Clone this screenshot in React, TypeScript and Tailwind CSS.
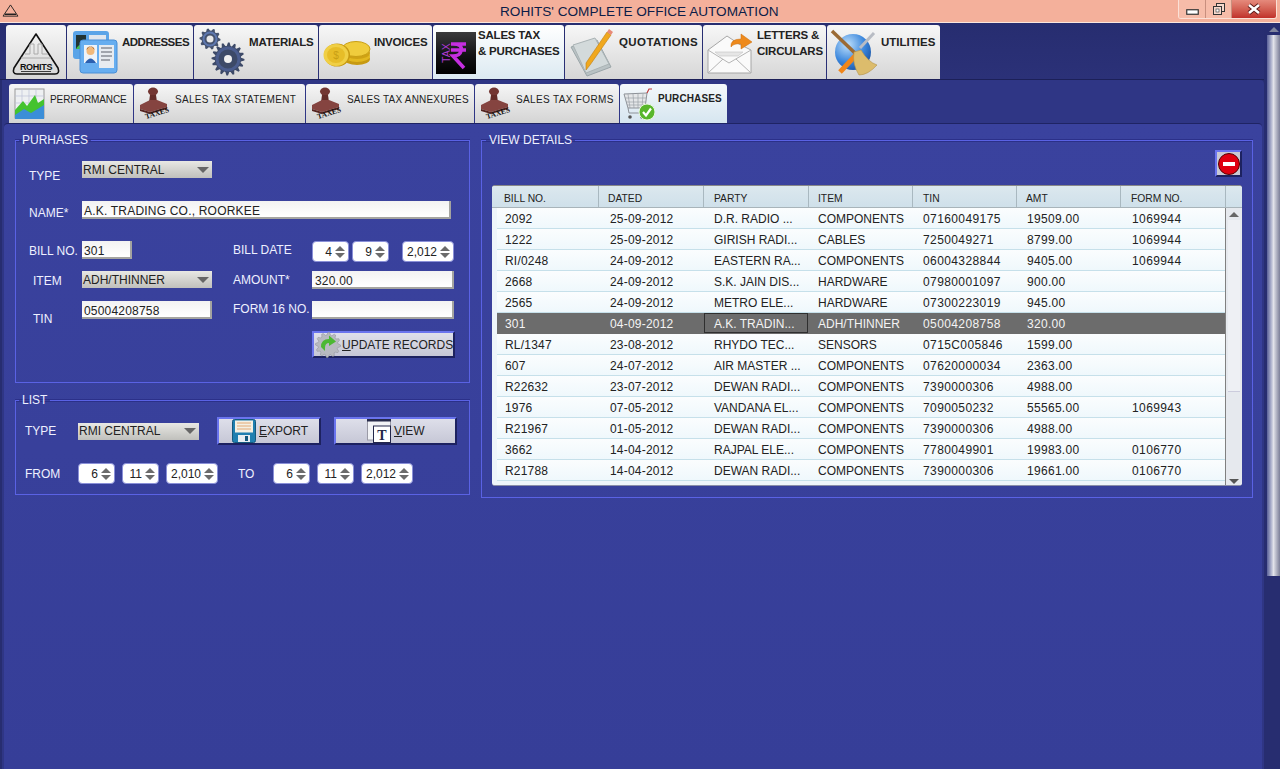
import React from 'react';

// teeth for the cog drawings
function gearPath(cx: number, cy: number, r: number, teeth: number) {
    const pts: string[] = [];
    for (let i = 0; i < teeth * 4; i++) {
        const a = (i / (teeth * 4)) * Math.PI * 2;
        const rad = i % 4 < 2 ? r : r * 0.8;
        pts.push(`${(cx + Math.cos(a) * rad).toFixed(1)},${(cy + Math.sin(a) * rad).toFixed(1)}`);
    }
    return `M${pts.join('L')}Z`;
}

const LogoIcon = ({ className }: { className?: string }) => (
    <svg viewBox="0 0 50 44" className={className}>
        <path d="M25 2 L47 36 Q49 42 44 42 H6 Q1 42 3 36 Z" fill="none" stroke="#111" strokeWidth="1.6" strokeLinejoin="round" />
        <path d="M14 22 H19 V12 H23 V22 H27 V12 H31 V22 H37" fill="none" stroke="#aaa" strokeWidth="1" />
        <path d="M10 26 H40" stroke="#aaa" strokeWidth="1" />
        <text x="25" y="37.5" textAnchor="middle" fontSize="9" fontWeight="700" letterSpacing="-0.3" fontFamily="Liberation Sans" fill="#111">ROHITS</text>
        <path d="M10 39.5 H40" stroke="#111" strokeWidth="0.8" />
    </svg>
);

const CardsIcon = ({ className }: { className?: string }) => (
    <svg viewBox="0 0 46 44" className={className}>
        <rect x="1" y="1" width="36" height="28" rx="3" fill="#5aa4e8" />
        <rect x="4" y="5" width="10" height="14" fill="#233" />
        <path d="M4 19 Q9 10 14 19 Z" fill="#3fbf4a" />
        <rect x="17" y="5" width="17" height="18" fill="#dfe6ee" />
        <rect x="8" y="10" width="37" height="33" rx="3" fill="#67aef0" stroke="#4a8fd6" />
        <rect x="12" y="15" width="13" height="18" fill="#eef3f8" />
        <circle cx="18.5" cy="21" r="4" fill="#f2b97a" />
        <path d="M14.5 20 Q18.5 13 22.5 20 L22 18 Q18.5 14.5 15 18 Z" fill="#a05a1c" />
        <path d="M13 33 Q18.5 24 24 33 Z" fill="#2b5fb0" />
        <rect x="27" y="15" width="15" height="23" fill="#e7ebf0" />
        <path d="M29 18 H40 M29 22 H40 M29 26 H40 M29 30 H38" stroke="#8b8f96" strokeWidth="1.4" />
    </svg>
);

const GearsIcon = ({ className }: { className?: string }) => (
    <svg viewBox="0 0 46 48" className={className}>
        <path d={gearPath(11, 11, 10.5, 10)} fill="#46536e" />
        <circle cx="11" cy="11" r="3.5" fill="#e8e8e8" />
        <circle cx="11" cy="11" r="6.5" fill="none" stroke="#5e78b0" strokeWidth="2" />
        <path d={gearPath(29, 31, 16.5, 16)} fill="#3d4a68" />
        <circle cx="29" cy="31" r="11" fill="none" stroke="#4b5d8e" strokeWidth="3" />
        <circle cx="29" cy="31" r="4" fill="#efefef" />
    </svg>
);

const CoinsIcon = ({ className }: { className?: string }) => (
    <svg viewBox="0 0 48 28" className={className}>
        <ellipse cx="34" cy="19" rx="13" ry="6" fill="#c79a12" />
        <ellipse cx="34" cy="16" rx="13" ry="6" fill="#e3b81f" />
        <ellipse cx="34" cy="13" rx="13" ry="6" fill="#cfa214" />
        <ellipse cx="33" cy="9" rx="14" ry="7.5" fill="#f0cc3c" stroke="#c99f14" />
        <ellipse cx="14" cy="15" rx="13" ry="11.5" fill="#c79a12" />
        <ellipse cx="13" cy="15" rx="12.5" ry="11" fill="#f0cf45" />
        <ellipse cx="13" cy="15" rx="9" ry="8" fill="#e7bd28" />
        <text x="13" y="19" textAnchor="middle" fontSize="10" fontFamily="Liberation Sans" fill="#c99f14">$</text>
    </svg>
);

const TaxIcon = ({ className }: { className?: string }) => (
    <svg viewBox="0 0 40 42" className={className}>
        <defs>
            <linearGradient id="taxBg" x1="0" y1="0" x2="0" y2="1">
                <stop offset="0" stopColor="#3a3a3c" />
                <stop offset="0.55" stopColor="#121214" />
                <stop offset="1" stopColor="#000" />
            </linearGradient>
        </defs>
        <rect width="40" height="42" fill="url(#taxBg)" />
        <path d="M15 12 H30 M15 18 H30 M17 12 Q27 12 25 19 Q24 24 17 24 L28 36" fill="none" stroke="#c52ee0" strokeWidth="3.6" />
        <text transform="translate(14 31) rotate(-90)" fontSize="10.5" fontFamily="Liberation Sans" fill="#b03ad8">TAX</text>
    </svg>
);

const PencilIcon = ({ className }: { className?: string }) => (
    <svg viewBox="0 0 46 48" className={className}>
        <path d="M2 18 L28 11 L42 38 L18 47 Z" fill="#b9c2c4" stroke="#9aa5a8" />
        <path d="M4 16 L26 9 L40 35 L17 44 Z" fill="#d3dadb" stroke="#aab3b5" />
        <path d="M38 3 L42 6 L21 36 L17 41 L17 34 Z" fill="#f0a81e" stroke="#c07d10" strokeWidth="0.6" />
        <path d="M38 3 L40 0 L44 3 L42 6 Z" fill="#e88a78" />
    </svg>
);

const EnvelopeIcon = ({ className }: { className?: string }) => (
    <svg viewBox="0 0 46 42" className={className}>
        <path d="M1 18 L20 4 L32 12 L44 18 V41 H1 Z" fill="#fafafa" stroke="#a6a6a6" />
        <path d="M1 18 L22 31 L44 18 M1 41 L16 27 M44 41 L29 27" fill="none" stroke="#b4b4b4" />
        <path d="M8 20 H36 L31 24 H13 Z" fill="#e6e6e6" stroke="#c4c4c4" strokeWidth="0.6" />
        <path d="M24 15 Q23 7 34 7 V2 L45 10 L34 17 V12 Q27 11 24 15 Z" fill="#ee8a1c" stroke="#c96c0e" strokeWidth="0.5" />
    </svg>
);

const BroomIcon = ({ className }: { className?: string }) => (
    <svg viewBox="0 0 48 48" className={className}>
        <defs>
            <radialGradient id="globe" cx="0.35" cy="0.3" r="0.8">
                <stop offset="0" stopColor="#bfe0fb" />
                <stop offset="0.6" stopColor="#3a86dc" />
                <stop offset="1" stopColor="#174e9e" />
            </radialGradient>
        </defs>
        <circle cx="23" cy="24" r="18" fill="url(#globe)" />
        <path d="M10 44 L27 26" stroke="#f0861a" strokeWidth="5" />
        <path d="M30 20 L44 5" stroke="#b8bcc4" strokeWidth="3" />
        <path d="M2 3 L27 27" stroke="#9b6a34" strokeWidth="3.5" />
        <path d="M24 24 L31 22 Q38 34 47 37 Q38 47 29 47 Q22 36 24 24 Z" fill="#dcbc6c" stroke="#b4944a" strokeWidth="0.6" />
    </svg>
);

const ChartIcon = ({ className }: { className?: string }) => (
    <svg viewBox="0 0 32 32" className={className}>
        <rect x="1" y="1" width="29" height="29" fill="#eef0f2" stroke="#9a9a9a" />
        <path d="M1 8 H30 M1 15 H30 M8 1 V30 M15 1 V30 M22 1 V30" stroke="#bcc2d8" strokeWidth="0.7" />
        <path d="M1 22 L9 13 L13 18 L21 7 L24 15 L30 11 V23 L23 24 L18 27 H6 L1 28 Z" fill="#44c32f" />
        <path d="M1 27 L10 21 L17 25 L30 17 V31 H1 Z" fill="#3b8ed8" />
    </svg>
);

const StampIcon = ({ className }: { className?: string }) => (
    <svg viewBox="0 0 32 34" className={className}>
        <ellipse cx="14" cy="4.5" rx="5" ry="4" fill="#733632" />
        <path d="M11 8 H17 L18 15 H10 Z" fill="#642c28" />
        <path d="M1 18 L11 13 H18 L28 17 V20 L11 25 L1 22 Z" fill="#854440" />
        <path d="M1 22 L11 25 L28 20 V22 L11 27 L1 24 Z" fill="#552421" />
        <text transform="translate(7 32) rotate(-17)" fontSize="7.5" fontWeight="700" fontFamily="Liberation Serif" fill="#111">TAXES</text>
    </svg>
);

const CartIcon = ({ className }: { className?: string }) => (
    <svg viewBox="0 0 32 34" className={className}>
        <path d="M1 7 L24 6 L22 21 H5 Z" fill="#e4e6e8" stroke="#8d9298" />
        <path d="M5 7 L7 21 M10 7 L11 21 M15 7 L15 21 M20 7 L19 21 M2 11 H23 M3 15 H23 M4 18 H22" stroke="#9ba1a8" strokeWidth="0.7" />
        <path d="M24 6 L26 2 H29" fill="none" stroke="#c03a3a" strokeWidth="1.2" />
        <path d="M5 21 L6 26 H20" fill="none" stroke="#8d9298" />
        <circle cx="7" cy="30" r="1.8" fill="#555" />
        <circle cx="19" cy="30" r="1.8" fill="#555" />
        <circle cx="24" cy="25" r="8" fill="#58b62c" stroke="#eaf6e0" />
        <path d="M20 25 L23 28.5 L28 21.5" fill="none" stroke="#fff" strokeWidth="2.2" />
    </svg>
);

const RefreshGear = ({ className }: { className?: string }) => (
    <svg viewBox="0 0 26 26" className={className}>
        <path d={gearPath(13, 13, 12.5, 12)} fill="#b8bac0" stroke="#8a8c92" strokeWidth="0.5" />
        <path d="M6 15 Q6 7 14 7 L14 3.5 L21 9.5 L14 14 L14 11 Q10 11 10 16 L10 19 Z" fill="#4cb832" />
    </svg>
);

const FloppyIcon = ({ className }: { className?: string }) => (
    <svg viewBox="0 0 24 24" className={className}>
        <rect x="0.5" y="0.5" width="23" height="23" rx="2" fill="#1f7fb0" stroke="#14597e" />
        <rect x="3" y="1.5" width="18" height="12" fill="#f4f0e4" />
        <path d="M5 4 H19 M5 7 H19 M5 10 H19" stroke="#e0a06a" strokeWidth="0.9" />
        <rect x="6" y="16" width="12" height="7" fill="#e8eef2" />
        <rect x="13" y="17" width="3" height="5" fill="#14597e" />
    </svg>
);

const ViewIcon = ({ className }: { className?: string }) => (
    <svg viewBox="0 0 24 24" className={className}>
        <rect x="0.5" y="1" width="23" height="20" fill="#f2f3f6" stroke="#9a9aa6" />
        <rect x="0" y="0" width="24" height="2.5" fill="#262a4a" />
        <rect x="6.5" y="7" width="17" height="16.5" fill="#fff" stroke="#23264a" />
        <text x="15" y="20.5" textAnchor="middle" fontSize="14" fontWeight="700" fontFamily="Liberation Serif" fill="#23264a">T</text>
    </svg>
);

const mainTabs = [
    { w: 'w-[60px]', left: 'w-[60px]', icon: <LogoIcon className="w-[50px] h-[44px] mt-[7px]" />, lines: [] as string[], track: '' },
    { w: 'w-[126px]', left: 'w-[55px]', icon: <CardsIcon className="w-[46px] h-[44px] mt-[5px]" />, lines: ['ADDRESSES'], track: 'tracking-[-0.5px]' },
    { w: 'w-[124px]', left: 'w-[55px]', icon: <GearsIcon className="w-[46px] h-[48px] mt-[3px]" />, lines: ['MATERIALS'], track: 'tracking-[-0.2px]' },
    { w: 'w-[113px]', left: 'w-[55px]', icon: <CoinsIcon className="w-[48px] h-[28px] mt-[15px]" />, lines: ['INVOICES'], track: 'tracking-[-0.2px]' },
    { w: 'w-[131px]', left: 'w-[45px]', icon: <TaxIcon className="w-[40px] h-[42px] mt-[7px]" />, lines: ['SALES TAX', '& PURCHASES'], active: true, track: 'tracking-[-0.2px]' },
    { w: 'w-[137px]', left: 'w-[54px]', icon: <PencilIcon className="w-[46px] h-[48px] mt-[4px]" />, lines: ['QUOTATIONS'], track: 'tracking-[0.4px]' },
    { w: 'w-[123px]', left: 'w-[54px]', icon: <EnvelopeIcon className="w-[46px] h-[42px] mt-[7px]" />, lines: ['LETTERS &', 'CIRCULARS'], track: 'tracking-[-0.2px]' },
    { w: 'w-[113px]', left: 'w-[54px]', icon: <BroomIcon className="w-[48px] h-[48px] mt-[3px]" />, lines: ['UTILITIES'], track: 'tracking-[0px]' },
];

const subTabs = [
    { w: 'w-[124px]', left: 'w-[41px]', icon: <ChartIcon className="w-[32px] h-[32px] mt-[4px]" />, label: 'PERFORMANCE', track: 'tracking-[-0.1px]' },
    { w: 'w-[171px]', left: 'w-[41px]', icon: <StampIcon className="w-[32px] h-[34px] mt-[3px]" />, label: 'SALES TAX STATEMENT', track: 'tracking-[0.3px]' },
    { w: 'w-[168px]', left: 'w-[41px]', icon: <StampIcon className="w-[32px] h-[34px] mt-[3px]" />, label: 'SALES TAX ANNEXURES', track: 'tracking-[0.2px]' },
    { w: 'w-[144px]', left: 'w-[41px]', icon: <StampIcon className="w-[32px] h-[34px] mt-[3px]" />, label: 'SALES TAX FORMS', track: 'tracking-[0.35px]' },
    { w: 'w-[107px]', left: 'w-[38px]', icon: <CartIcon className="w-[32px] h-[34px] mt-[3px]" />, label: 'PURCHASES', active: true, track: 'tracking-[0.1px]' },
];

const rows = [
    ['2092', '25-09-2012', 'D.R. RADIO ...', 'COMPONENTS', '07160049175', '19509.00', '1069944'],
    ['1222', '25-09-2012', 'GIRISH RADI...', 'CABLES', '7250049271', '8799.00', '1069944'],
    ['RI/0248', '24-09-2012', 'EASTERN RA...', 'COMPONENTS', '06004328844', '9405.00', '1069944'],
    ['2668', '24-09-2012', 'S.K. JAIN DIS...', 'HARDWARE', '07980001097', '900.00', ''],
    ['2565', '24-09-2012', 'METRO ELE...', 'HARDWARE', '07300223019', '945.00', ''],
    ['301', '04-09-2012', 'A.K. TRADIN...', 'ADH/THINNER', '05004208758', '320.00', ''],
    ['RL/1347', '23-08-2012', 'RHYDO TEC...', 'SENSORS', '0715C005846', '1599.00', ''],
    ['607', '24-07-2012', 'AIR MASTER ...', 'COMPONENTS', '07620000034', '2363.00', ''],
    ['R22632', '23-07-2012', 'DEWAN RADI...', 'COMPONENTS', '7390000306', '4988.00', ''],
    ['1976', '07-05-2012', 'VANDANA EL...', 'COMPONENTS', '7090050232', '55565.00', '1069943'],
    ['R21967', '01-05-2012', 'DEWAN RADI...', 'COMPONENTS', '7390000306', '4988.00', ''],
    ['3662', '14-04-2012', 'RAJPAL ELE...', 'COMPONENTS', '7780049901', '19983.00', '0106770'],
    ['R21788', '14-04-2012', 'DEWAN RADI...', 'COMPONENTS', '7390000306', '19661.00', '0106770'],
];

const headers = ['BILL NO.', 'DATED', 'PARTY', 'ITEM', 'TIN', 'AMT', 'FORM NO.'];
const headerCols = ['w-[107px] pl-[12px]', 'w-[105px] pl-[9px]', 'w-[105px] pl-[10px]', 'w-[104px] pl-[9px]', 'w-[104px] pl-[10px]', 'w-[104px] pl-[9px]', 'w-[105px] pl-[10px]'];
const cellCols = ['w-[103px] pl-[8px]', 'w-[104px] pl-[10px]', 'w-[104px] pl-[10px]', 'w-[105px] pl-[10px]', 'w-[104px] pl-[10px]', 'w-[105px] pl-[10px]', 'w-[103px] pl-[10px]'];
const cellTrack = ['tracking-[0.2px]', 'tracking-[0.2px]', 'tracking-[0px]', 'tracking-[0px]', 'tracking-[0.4px]', 'tracking-[0.3px]', 'tracking-[0.4px]'];

const Arrows = () => (
    <span className="flex flex-col gap-[2px] ml-[3px] mr-[3px]">
        <span className="w-0 h-0 border-x-[5.5px] border-x-transparent border-b-[5px] border-b-[#6b6b6b]" />
        <span className="w-0 h-0 border-x-[5.5px] border-x-transparent border-t-[5px] border-t-[#6b6b6b]" />
    </span>
);

const Spinner = ({ value, className }: { value: string; className: string }) => (
    <div className={`${className} h-[21px] bg-white rounded-[4px] border border-[#8a90d8] flex items-center justify-end text-[12px] text-[#222] shrink-0`}>
        {value}
        <Arrows />
    </div>
);

const Combo = ({ value, className }: { value: string; className: string }) => (
    <div className={`${className} h-[17px] bg-gradient-to-b from-[#e8e8e4] to-[#c0c0bc] flex items-center justify-between pl-[1px] pr-[2px] text-[12px] text-[#222] shrink-0`}>
        <span>{value}</span>
        <span className="w-0 h-0 mr-[1px] border-x-[6px] border-x-transparent border-t-[6px] border-t-[#666]" />
    </div>
);

const Field = ({ value, className }: { value?: string; className: string }) => (
    <div className={`${className} h-[18px] bg-gradient-to-b from-[#f2f2f2] to-white border-r-2 border-b-2 border-r-[#a4a4a0] border-b-[#a4a4a0] flex items-center pl-[2px] pt-[4px] text-[12px] leading-[14px] tracking-[0.2px] text-[#222] shrink-0`}>
        {value}
    </div>
);

const Label = ({ text, className }: { text: string; className: string }) => (
    <span className={`${className} text-[12px] leading-[14px] text-[#eef0ff] whitespace-nowrap shrink-0`}>{text}</span>
);

const ActionButton = ({ className, icon, hot, rest }: { className: string; icon: React.ReactNode; hot: string; rest: string }) => (
    <div className={`${className} bg-gradient-to-b from-[#dedfea] to-[#c6c7d6] border-2 border-l-[#6a74ee] border-t-[#6a74ee] border-r-[#1d2260] border-b-[#1d2260] flex items-center text-[12px] text-[#222] whitespace-nowrap shrink-0`}>
        {icon}
        <span><span className="underline">{hot}</span>{rest}</span>
    </div>
);

const legendClass = 'ml-[3px] px-[3px] text-[12px] leading-[14px] text-[#eef0ff]';
const fieldsetClass = 'border border-[#5a62e4] shadow-[inset_0_1px_0_#2b3089,0_-1px_0_#2b3089] shrink-0';

export default function App() {
    return (
        <div className="w-[1280px] h-[769px] overflow-hidden flex flex-col bg-[#272d70]" style={{ fontFamily: '"Liberation Sans", Arial, sans-serif' }}>
            {/* title bar */}
            <div className="h-[23px] shrink-0 bg-[#f4b09b] border-b border-b-[#fbe6de] flex items-start">
                <svg viewBox="0 0 18 15" className="w-[17px] h-[14px] ml-[2px] mt-[4px] shrink-0">
                    <path d="M9 1 L17 13 H1 Z" fill="none" stroke="#222" strokeWidth="1" strokeLinejoin="round" />
                    <path d="M3 11 H15" stroke="#222" strokeWidth="1.6" />
                </svg>
                <span className="ml-[481px] text-[13.6px] leading-[24px] text-[#0c1d48] whitespace-nowrap">ROHITS' COMPLETE OFFICE AUTOMATION</span>
                <div className="ml-auto mr-[3px] h-[19px] flex border border-t-0 border-[#fbe0d6] rounded-b-[3px] overflow-hidden">
                    <div className="w-[27px] border-r border-[#c88f7e] flex items-end justify-center bg-[#f6bca9]">
                        <svg viewBox="0 0 13 6" className="w-[13px] h-[6px] mb-[3px]"><rect x="0.75" y="0.75" width="11.5" height="4.5" fill="#fff" stroke="#333" strokeWidth="1.2" /></svg>
                    </div>
                    <div className="w-[26px] border-r border-[#c88f7e] flex items-center justify-center bg-[#f6bca9]">
                        <svg viewBox="0 0 12 12" className="w-[12px] h-[12px]"><rect x="3.5" y="0.5" width="8" height="8" fill="#f6d8cc" stroke="#333" /><rect x="0.5" y="3.5" width="8" height="8" fill="#f6d8cc" stroke="#333" /><rect x="3" y="6" width="3" height="3" fill="#fff" stroke="#333" strokeWidth="0.6" /></svg>
                    </div>
                    <div className="w-[44px] flex items-center justify-center bg-gradient-to-b from-[#e58a7c] to-[#c0302a]">
                        <svg viewBox="0 0 16 12" className="w-[16px] h-[12px]"><path d="M3 2 L13 10 M13 2 L3 10" stroke="#5a1a18" strokeWidth="4.4" /><path d="M3 2 L13 10 M13 2 L3 10" stroke="#fff" strokeWidth="2.6" /></svg>
                    </div>
                </div>
            </div>

            <div className="flex-1 flex min-h-0">
                <div className="w-[1264px] flex flex-col">
                    {/* top tabs */}
                    <div className="h-[57px] shrink-0 pl-[6px] pt-[2px] flex gap-[1px] bg-gradient-to-b from-[#272d70] to-[#2b3178] border-b border-b-[#1c2058]">
                        {mainTabs.map((t, i) => (
                            <div key={i} className={`${t.w} h-[54px] flex rounded-t-[3px] overflow-hidden shrink-0 bg-gradient-to-b ${t.active ? 'from-[#ffffff] to-[#dceaf2]' : 'from-[#f7f7f7] to-[#d6d6d6]'}`}>
                                <div className={`${t.left} flex justify-center items-start shrink-0`}>{t.icon}</div>
                                <div className={`flex flex-col ${t.lines.length === 2 ? 'pt-[2px]' : 'pt-[9px]'}`}>
                                    {t.lines.map(l => <span key={l} className={`text-[11.5px] leading-[16px] font-bold text-[#222] whitespace-nowrap ${t.track}`}>{l}</span>)}
                                </div>
                            </div>
                        ))}
                    </div>

                    {/* sales tax panel */}
                    <div className="flex-1 ml-[2px] flex flex-col bg-[#2f3685] rounded-tr-[4px] min-h-0">
                        <div className="h-[43px] shrink-0 pl-[7px] pt-[4px] flex gap-[1px]">
                            {subTabs.map((t, i) => (
                                <div key={i} className={`${t.w} h-[39px] flex rounded-t-[3px] overflow-hidden shrink-0 bg-gradient-to-b ${t.active ? 'from-[#f4f8fb] to-[#d6e6f0]' : 'from-[#f6f6f6] to-[#d4d4d4]'}`}>
                                    <div className={`${t.left} flex justify-center items-start shrink-0`}>{t.icon}</div>
                                    <span className={`text-[10px] leading-[14px] whitespace-nowrap text-[#222] ${t.track} ${t.active ? 'font-bold pt-[8px]' : 'pt-[9px]'}`}>{t.label}</span>
                                </div>
                            ))}
                        </div>

                        <div className="flex-1 ml-[2px] mr-[2px] flex items-start gap-[11px] pl-[11px] pt-[9px] bg-gradient-to-b from-[#3a429e] to-[#363e98] border-t border-t-[#1f2464] rounded-t-[4px]">
                            {/* left column */}
                            <div className="flex flex-col w-[455px] gap-[10px] shrink-0">
                                <fieldset className={`${fieldsetClass} h-[250px]`}>
                                    <legend className={legendClass}>PURHASES</legend>
                                    <div className="flex items-start mt-[14px]">
                                        <Label text="TYPE" className="ml-[13px] w-[53px] mt-[8px]" />
                                        <Combo value="RMI CENTRAL" className="w-[130px]" />
                                    </div>
                                    <div className="flex items-start mt-[18px]">
                                        <Label text="NAME*" className="ml-[13px] w-[53px] mt-[5px]" />
                                        <Field value="A.K. TRADING CO., ROORKEE" className="w-[369px]" />
                                    </div>
                                    <div className="flex items-start mt-[21px]">
                                        <Label text="BILL NO." className="ml-[13px] w-[53px] mt-[3px]" />
                                        <Field value="301" className="w-[50px]" />
                                        <Label text="BILL DATE" className="ml-[101px] w-[79px] mt-[2px]" />
                                        <Spinner value="4" className="w-[37px]" />
                                        <Spinner value="9" className="w-[37px] ml-[3px]" />
                                        <Spinner value="2,012" className="w-[52px] ml-[13px]" />
                                    </div>
                                    <div className="flex items-start mt-[9px]">
                                        <Label text="ITEM" className="ml-[17px] w-[49px] mt-[3px]" />
                                        <Combo value="ADH/THINNER" className="w-[130px]" />
                                        <Label text="AMOUNT*" className="ml-[21px] w-[79px] mt-[2px]" />
                                        <Field value="320.00" className="w-[142px] pl-[3px]" />
                                    </div>
                                    <div className="flex items-start mt-[12px]">
                                        <Label text="TIN" className="ml-[17px] w-[49px] mt-[11px]" />
                                        <Field value="05004208758" className="w-[130px]" />
                                        <Label text="FORM 16 NO." className="ml-[21px] w-[79px] mt-[1px]" />
                                        <Field className="w-[142px]" />
                                    </div>
                                    <div className="flex mt-[5px]">
                                        <ActionButton className="ml-[296px] w-[143px] h-[27px]" icon={<RefreshGear className="w-[26px] h-[26px] mx-[1px] shrink-0" />} hot="U" rest="PDATE RECORDS" />
                                    </div>
                                </fieldset>

                                <fieldset className={`${fieldsetClass} h-[102px]`}>
                                    <legend className={legendClass}>LIST</legend>
                                    <div className="flex items-center mt-[10px]">
                                        <Label text="TYPE" className="ml-[9px] w-[53px]" />
                                        <Combo value="RMI CENTRAL" className="w-[121px]" />
                                        <ActionButton className="ml-[18px] w-[104px] h-[28px]" icon={<FloppyIcon className="w-[24px] h-[24px] ml-[13px] mr-[3px] shrink-0" />} hot="E" rest="XPORT" />
                                        <ActionButton className="ml-[13px] w-[123px] h-[28px]" icon={<ViewIcon className="w-[24px] h-[24px] ml-[31px] mr-[3px] shrink-0" />} hot="V" rest="IEW" />
                                    </div>
                                    <div className="flex items-center mt-[18px]">
                                        <Label text="FROM" className="ml-[9px] w-[53px]" />
                                        <Spinner value="6" className="w-[37px]" />
                                        <Spinner value="11" className="w-[37px] ml-[7px]" />
                                        <Spinner value="2,010" className="w-[52px] ml-[7px]" />
                                        <Label text="TO" className="ml-[20px] w-[35px]" />
                                        <Spinner value="6" className="w-[37px]" />
                                        <Spinner value="11" className="w-[37px] ml-[7px]" />
                                        <Spinner value="2,012" className="w-[52px] ml-[7px]" />
                                    </div>
                                </fieldset>
                            </div>

                            {/* right column */}
                            <fieldset className={`${fieldsetClass} w-[771px] h-[365px] px-[10px]`}>
                                <legend className="-ml-[6px] px-[3px] text-[12px] leading-[14px] text-[#eef0ff]">VIEW DETAILS</legend>
                                <div className="flex justify-end mt-[3px]">
                                    <div className="w-[27px] h-[27px] bg-[#c9c9d4] border-2 border-l-[#6a74ee] border-t-[#6a74ee] border-r-[#1d2260] border-b-[#1d2260] flex items-center justify-center">
                                        <div className="w-[22px] h-[22px] rounded-full bg-[#e00010] border border-[#500] flex items-center justify-center">
                                            <div className="w-[12px] h-[4px] bg-white" />
                                        </div>
                                    </div>
                                </div>
                                <div className="mt-[8px] h-[301px] bg-[#eef5fa] rounded-[3px] border-t border-t-[#888] border-b border-b-[#8a8ea8] overflow-hidden flex flex-col">
                                    <div className="h-[22px] shrink-0 flex bg-gradient-to-b from-[#dce8ee] to-[#cfe0ea] border-b border-b-[#a8b4ba]">
                                        {headers.map((h, i) => (
                                            <div key={h} className={`${headerCols[i]} border-r border-r-[#a9b8c0] text-[10.3px] leading-[25px] text-[#222] whitespace-nowrap`}>{h}</div>
                                        ))}
                                    </div>
                                    <div className="flex-1 flex min-h-0 pl-[5px]">
                                        <div className="w-[728px] shrink-0 flex flex-col">
                                            {rows.map(r => {
                                                const sel = r[0] === '301';
                                                return (
                                                    <div key={r[0]} className={`h-[21px] shrink-0 flex border-b ${sel ? 'bg-[#6c6c6c] border-b-[#6c6c6c] text-[#f4f4f4]' : 'bg-gradient-to-b from-[#fbfdfe] to-[#eff8fc] border-b-[#c6e0ea] text-[#222]'}`}>
                                                        {r.map((c, i) => (
                                                            <div key={i} className={`${cellCols[i]} ${cellTrack[i]} text-[12px] leading-[22px] h-[20px] whitespace-nowrap ${sel && i === 2 ? 'outline outline-1 -outline-offset-1 outline-[#2f2f2f]' : ''}`}>{c}</div>
                                                        ))}
                                                    </div>
                                                );
                                            })}
                                        </div>
                                        <div className="w-[17px] shrink-0 border-l border-l-[#808080] bg-[#e6e9ee] flex flex-col items-center justify-between pt-[4px] pb-[1px]">
                                            <span className="w-0 h-0 border-x-[5px] border-x-transparent border-b-[5px] border-b-[#666]" />
                                            <div className="w-[12px] h-[172px] mb-auto mt-[3px] bg-[#eef0f4] border-b border-b-[#ccd]" />
                                            <span className="w-0 h-0 border-x-[5px] border-x-transparent border-t-[5px] border-t-[#555]" />
                                        </div>
                                    </div>
                                </div>
                            </fieldset>
                        </div>
                    </div>
                </div>

                {/* window scrollbar */}
                <div className="flex-1 flex flex-col items-center pl-[3px] pt-[4px] bg-[#272d70]">
                    <span className="w-0 h-0 border-x-[5px] border-x-transparent border-b-[5px] border-b-[#7f849e]" />
                    <div className="mt-[3px] w-[13px] h-[541px] bg-gradient-to-r from-[#5a6098] via-[#e2e3ea] to-[#7c7f98]" />
                </div>
            </div>
        </div>
    );
}
